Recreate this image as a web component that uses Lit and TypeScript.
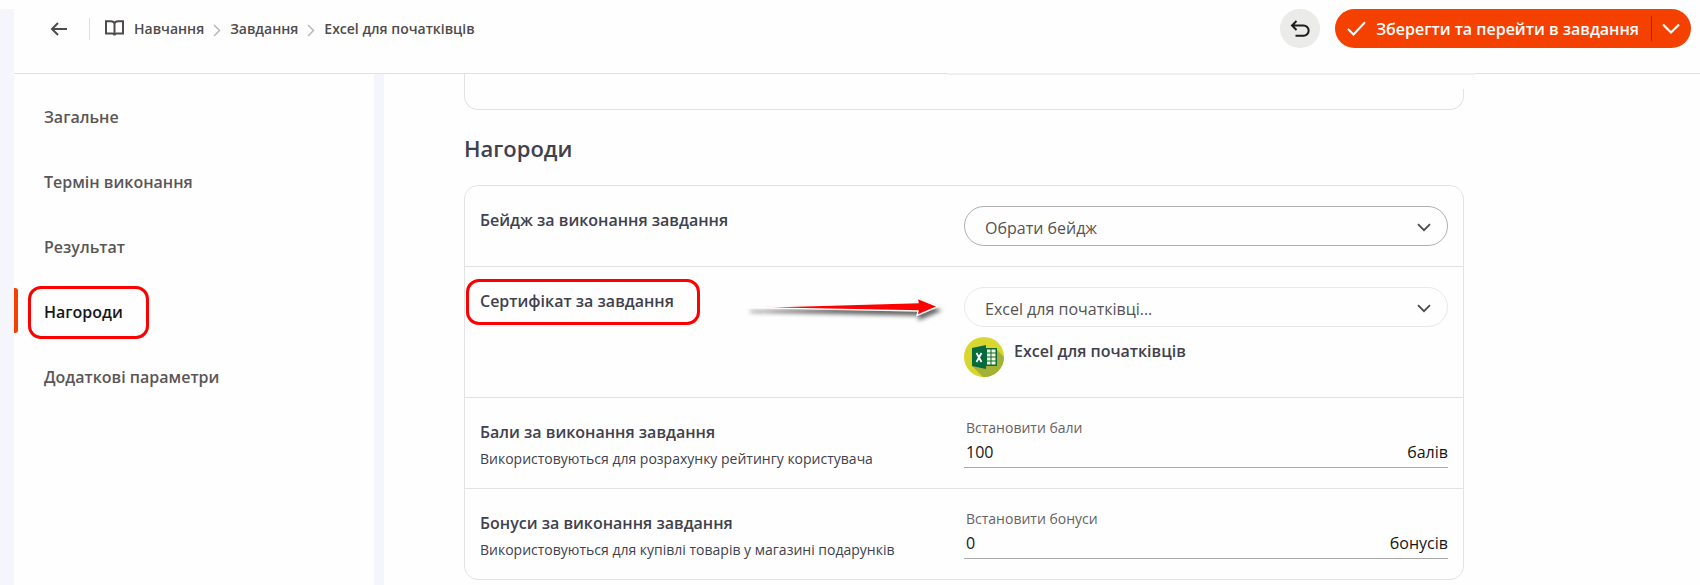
import { LitElement, html, css } from "lit";
import { customElement } from "lit/decorators.js";

const FONT = css`"Open Sans", "Noto Sans", sans-serif`;

const chevronDown = html`<svg class="chevron" viewBox="0 0 14 9" width="14" height="9" aria-hidden="true">
  <path d="M1 1.2 7 7.2 13 1.2" fill="none" stroke="currentColor" stroke-width="1.8" />
</svg>`;

@customElement("app-header")
class AppHeader extends LitElement {
  static styles = css`
    :host { display: block; border-bottom: 1px solid #e1e1e3; }
    .bar { display: flex; align-items: flex-start; justify-content: space-between; padding: 0 9px 25px 36px; }
    .trail { display: flex; align-items: center; height: 39px; }
    .back { display: flex; padding: 0; border: 0; background: none; color: #4f4b4d; cursor: pointer; }
    .trail nav { display: flex; align-items: center; margin-left: 21px; padding-left: 15px; border-left: 1px solid #dfdfe1; height: 22px; }
    .crumb { display: flex; align-items: center; gap: 10px; font: 600 14px/22px ${FONT}; color: #4f4b4d; text-decoration: none; white-space: nowrap; }
    .sep { margin: 4px 9px 0; color: #b9b8ba; }
    .actions { display: flex; gap: 15px; }
    .undo { display: flex; align-items: center; justify-content: center; width: 40px; height: 39px; padding: 0; border: 0; border-radius: 20px; background: #ebebea; color: #1c1c1c; cursor: pointer; }
    .save { display: flex; height: 39px; border-radius: 20px; overflow: hidden; background: #f54100; color: #fff; }
    .save button { display: flex; align-items: center; border: 0; background: none; color: inherit; font: 600 16px/24px ${FONT}; white-space: nowrap; cursor: pointer; }
    .save .main { gap: 10px; padding: 0 12px; }
    .save .more { padding: 0 11px 0 10px; }
    .split { align-self: center; width: 1px; height: 25px; background: #b3200b; }
  `;
  sep = html`<svg class="sep" viewBox="0 0 8 13" width="8" height="13" aria-hidden="true">
    <path d="M1 1 6.5 6.5 1 12" fill="none" stroke="currentColor" stroke-width="1.5" />
  </svg>`;
  render() {
    return html`<div class="bar">
      <div class="trail">
        <button class="back" aria-label="Назад">
          <svg viewBox="0 0 18 14" width="18" height="14" fill="none" stroke="currentColor" stroke-width="2">
            <path d="M17 7H2M8 1 2 7 8 13" />
          </svg>
        </button>
        <nav>
          <a class="crumb" href="#learning">
            <svg viewBox="0 0 19 17" width="19" height="17" fill="none" stroke="currentColor" stroke-width="2">
              <path d="M9.5 3.5C9 2 7.8 1.2 6 1.2H1V13.4H7.2C8.5 13.4 9.5 14.4 9.5 15.6 9.5 14.4 10.5 13.4 11.8 13.4H18V1.2H13C11.2 1.2 10 2 9.5 3.5V15.5" />
            </svg>Навчання</a>
          ${this.sep}
          <a class="crumb" href="#tasks">Завдання</a>
          ${this.sep}
          <a class="crumb" href="#task">Excel для початківців</a>
        </nav>
      </div>
      <div class="actions">
        <button class="undo" aria-label="Скасувати">
          <svg viewBox="0 0 20 18" width="20" height="18" fill="none" stroke="currentColor" stroke-width="2">
            <path d="M6.5 1 2 5.5 6.5 10M2 5.500H13.5A5 5 0 0 1 13.5 15.800H5.5" />
          </svg>
        </button>
        <div class="save">
          <button class="main">
            <svg viewBox="0 0 19 15" width="19" height="15" fill="none" stroke="currentColor" stroke-width="2">
              <path d="M1 8 6.5 13.5 18 1.2" />
            </svg>Зберегти та перейти в завдання
          </button>
          <span class="split"></span>
          <button class="more" aria-label="Інші дії">
            <svg viewBox="0 0 18 12" width="18" height="12" fill="none" stroke="currentColor" stroke-width="2.2">
              <path d="M1 1.5 9 9.5 17 1.5" />
            </svg>
          </button>
        </div>
      </div>
    </div>`;
  }
}

@customElement("side-menu")
class SideMenu extends LitElement {
  static styles = css`
    :host { display: block; flex: 0 0 360px; box-sizing: border-box; }
    nav { display: flex; flex-direction: column; gap: 20px; padding: 20px 0; }
    a { position: relative; display: flex; align-items: center; height: 45px; padding-left: 30px; font: 600 16px/24px ${FONT}; color: #5a5657; text-decoration: none; }
    .active { color: #161616; }
    .active::before { content: ""; position: absolute; left: 0; top: -1px; width: 4px; height: 45px; border-radius: 0 3px 3px 0; background: #f54100; }
    .mark { position: absolute; left: 14px; top: -3px; width: 121px; height: 53px; box-sizing: border-box; border: 3px solid #f00; border-radius: 13px; }
  `;
  items = ["Загальне", "Термін виконання", "Результат", "Нагороди", "Додаткові параметри"];
  render() {
    return html`<nav>
      ${this.items.map((name, i) => i === 3
        ? html`<a class="active" href="#s${i}" aria-current="true">${name}<span class="mark"></span></a>`
        : html`<a href="#s${i}">${name}</a>`)}
    </nav>`;
  }
}

@customElement("rewards-form")
class RewardsForm extends LitElement {
  static styles = css`
    :host { display: block; flex: 1; min-width: 0; background: #fefefe; }
    .column { max-width: 1000px; margin-left: 80px; margin-right: 16px; }
    .previous { position: relative; height: 36px; box-sizing: border-box; border: 1px solid #e3e3e5; border-top: 0; border-radius: 0 0 14px 14px; }
    .previous::after { content: ""; position: absolute; right: -12px; top: -1px; width: 528px; height: 16px; box-sizing: border-box; border-top: 2px solid #efeff0; background: #fefefe; }
    h2 { margin: 22px 0 21px; font: 600 22px/32px ${FONT}; color: #40414d; }
    .card { border: 1px solid #e3e3e5; border-radius: 14px; }
    .row { display: grid; grid-template-columns: 1fr 1fr; padding: 20px 15px; }
    .row + .row { border-top: 1px solid #e3e3e5; }
    .title { position: relative; font: 600 16px/24px ${FONT}; color: #40414d; }
    .about { padding-top: 2px; }
    .note { margin: 6px 0 0; font: 14px/18px ${FONT}; color: #40414d; }
    .picker { position: relative; display: block; color: #4f4b4d; }
    select { display: block; width: 100%; height: 40px; padding: 4px 40px 0 20px; border: 1px solid #b0afb1; border-radius: 20px; background: transparent; appearance: none; font: 16px/24px ${FONT}; color: #555253; }
    .pale select { border-color: #e9e9ea; }
    .chevron { position: absolute; right: 17px; top: 17px; pointer-events: none; }
    .award { display: flex; gap: 10px; margin-top: 10px; }
    .award .title { padding-top: 2px; }
    .field { display: flex; flex-direction: column; border-bottom: 1px solid #a9a8aa; }
    .field label { padding-left: 2px; font: 14px/20px ${FONT}; color: #666263; }
    .value { display: flex; align-items: center; padding-bottom: 1px; font: 16px/28px ${FONT}; color: #161616; }
    input { flex: 1; min-width: 0; height: 28px; padding: 0 0 0 2px; border: 0; background: none; font: inherit; color: inherit; outline: 0; }
    .mark { position: absolute; left: -14px; top: -10px; width: 234px; height: 46px; box-sizing: border-box; border: 3px solid #f00; border-radius: 13px; }
    .arrow { position: absolute; left: 264px; top: 6px; overflow: visible; filter: drop-shadow(2px 4px 2px rgba(0, 0, 0, 0.6)); }
  `;
  picker(id: string, value: string, pale = false) {
    return html`<div class="picker ${pale ? "pale" : ""}">
      <select id=${id}><option>${value}</option></select>${chevronDown}
    </div>`;
  }
  field(id: string, label: string, value: string, unit: string) {
    return html`<div class="field">
      <label for=${id}>${label}</label>
      <div class="value"><input id=${id} .value=${value} inputmode="numeric" /><span>${unit}</span></div>
    </div>`;
  }
  badge = html`<svg viewBox="0 0 40 40" width="40" height="40" aria-hidden="true">
    <clipPath id="round"><circle cx="20" cy="20" r="20" /></clipPath>
    <g clip-path="url(#round)">
      <rect width="40" height="40" fill="#d9d62f" />
      <path d="M8 29 22 43H42V22L32 12Z" fill="#a3b236" />
      <rect x="21" y="11" width="12" height="18" fill="#0b6b3d" />
      <path d="M23 12.500h3.500v3H23zM27.500 12.500H31.500v3h-4zM23 16.500h3.500v3H23zM27.500 16.500H31.500v3h-4zM23 20.500h3.500v3H23zM27.500 20.500H31.500v3h-4zM23 24.500h3.500v3H23zM27.500 24.500H31.500v3h-4z" fill="#f4f7d8" />
      <path d="M8 11 22 8V32L8 29Z" fill="#066a3c" />
      <path d="M12.500 16 17.500 25M17.500 16 12.500 25" stroke="#fff" stroke-width="1.8" />
    </g>
  </svg>`;
  render() {
    return html`<div class="column">
      <div class="previous"></div>
      <h2>Нагороди</h2>
      <div class="card">
        <div class="row">
          <label class="title about" for="badge">Бейдж за виконання завдання</label>
          ${this.picker("badge", "Обрати бейдж")}
        </div>
        <div class="row">
          <div class="about"><div class="title">
            <label for="certificate">Сертифікат за завдання</label>
            <span class="mark"></span>
            <svg class="arrow" viewBox="0 0 200 24" width="200" height="24" aria-hidden="true">
              <path d="M4 12.500 174 7.500 173 3 194 11.500 173 20.500 174 16Z" fill="#f00" stroke="#fff" stroke-width="1.4" />
            </svg>
          </div></div>
          <div>
            ${this.picker("certificate", "Excel для початківці...", true)}
            <div class="award">${this.badge}<div class="title">Excel для початківців</div></div>
          </div>
        </div>
        <div class="row">
          <div class="about">
            <div class="title">Бали за виконання завдання</div>
            <p class="note">Використовуються для розрахунку рейтингу користувача</p>
          </div>
          ${this.field("points", "Встановити бали", "100", "балів")}
        </div>
        <div class="row">
          <div class="about">
            <div class="title">Бонуси за виконання завдання</div>
            <p class="note">Використовуються для купівлі товарів у магазині подарунків</p>
          </div>
          ${this.field("bonuses", "Встановити бонуси", "0", "бонусів")}
        </div>
      </div>
    </div>`;
  }
}

@customElement("app-root")
class AppRoot extends LitElement {
  static styles = css`
    :host { display: flex; flex-direction: column; min-height: 100vh; box-sizing: border-box; padding-top: 9px; background: #fefefe; }
    .shell { flex: 1; display: flex; flex-direction: column; border-left: 14px solid #f4f6fb; }
    .body { flex: 1; display: flex; }
    .gutter { flex: 0 0 10px; background: #f4f6fb; }
  `;
  render() {
    return html`<div class="shell">
      <app-header></app-header>
      <div class="body">
        <side-menu></side-menu>
        <div class="gutter"></div>
        <rewards-form></rewards-form>
      </div>
    </div>`;
  }
}
